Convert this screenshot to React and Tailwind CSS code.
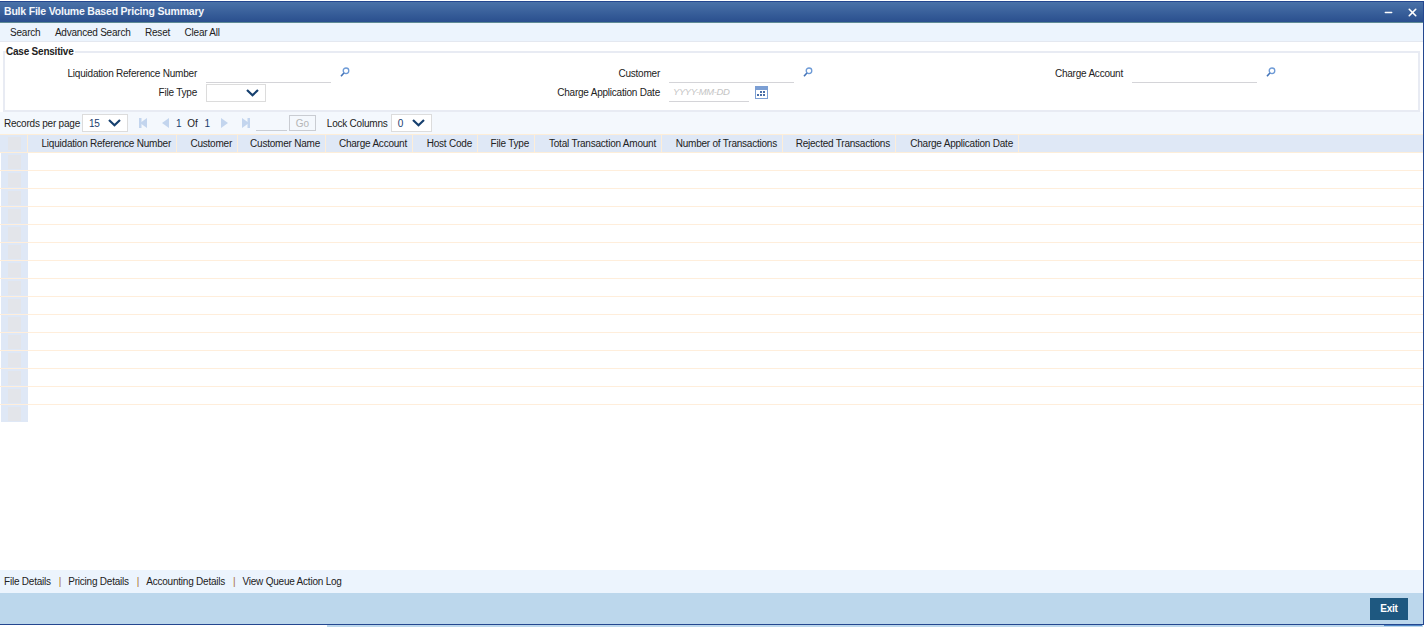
import React from "react";
import { X, Minus } from "lucide-react";

const columns = [
  { label: "Liquidation Reference Number", width: "w-[149px]" },
  { label: "Customer", width: "w-[61px]" },
  { label: "Customer Name", width: "w-[88px]" },
  { label: "Charge Account", width: "w-[87px]" },
  { label: "Host Code", width: "w-[65px]" },
  { label: "File Type", width: "w-[57px]" },
  { label: "Total Transaction Amount", width: "w-[127px]" },
  { label: "Number of Transactions", width: "w-[121px]" },
  { label: "Rejected Transactions", width: "w-[113px]" },
  { label: "Charge Application Date", width: "w-[123px]" },
];

const rows = Array.from({ length: 15 }, (_, i) => i);

const LookupIcon = () => (
  <svg width="10" height="10" viewBox="0 0 10 10" className="ml-[9px] mb-[4px]">
    <circle cx="6" cy="3.8" r="2.8" fill="none" stroke="#6d9ad6" strokeWidth="1.3" />
    <path d="M3.9 6 L1 9.2" stroke="#4474b8" strokeWidth="1.6" />
  </svg>
);

const CalendarIcon = () => (
  <svg width="13" height="13" viewBox="0 0 13 13" className="ml-[6px]">
    <rect x="0" y="0" width="13" height="13" fill="#7c9fd4" />
    <rect x="1" y="4" width="11" height="8" fill="#ffffff" />
    <path d="M5 5h2v2H5zM8 5h2v2H8zM2 8h2v2H2zM5 8h2v2H5zM8 8h2v2H8z" fill="#4a6fa8" />
  </svg>
);

const SelectBox = ({ value, width }) => (
  <div className={`flex h-[18px] items-center justify-between border border-[#dcdcdc] bg-white pl-[6px] pr-[6px] ${width}`}>
    <span className="text-[#1a3c6e]">{value}</span>
    <svg width="13" height="8" viewBox="0 0 13 8">
      <path d="M1 1 L6.5 6.2 L12 1" fill="none" stroke="#16406f" strokeWidth="2.2" />
    </svg>
  </div>
);

const PagerIcon = ({ dir, bar }) => (
  <svg width="9" height="10" viewBox="0 0 9 10" fill="#c3d5ee">
    {dir === "left" ? <path d="M8 0v10L1 5z" /> : <path d="M1 0v10l7-5z" />}
    {bar && (dir === "left" ? <rect x="0" y="0" width="2.5" height="10" /> : <rect x="6.5" y="0" width="2.5" height="10" />)}
  </svg>
);

const Field = ({ label, children }) => (
  <div className="flex h-[19px] items-center">
    <label className="w-[192px] shrink-0 text-right">{label}</label>
    <div className="ml-[9px] flex items-center">{children}</div>
  </div>
);

const TextInput = ({ width = "w-[125px]", placeholder }) => (
  <div className={`flex h-[18px] items-center border-b border-[#d4d4d8] pl-[4px] text-[9.5px] italic tracking-[-0.4px] text-[#c4c4c4] ${width}`}>
    {placeholder}
  </div>
);

export default function App() {
  return (
    <div className="h-[627px] w-[1427px] overflow-hidden bg-white font-['Liberation_Sans',Arial,sans-serif] text-[10px] tracking-[-0.22px] text-[#222222]">
      <div className="mt-[1px] flex h-[624px] w-[1424px] flex-col border-t border-r border-b border-[#24478f]">
        {/* title bar */}
        <div className="flex h-[21px] shrink-0 items-center justify-between border-b border-[#5f8a94] bg-gradient-to-b from-[#4a72a8] to-[#2a4f8e] pl-[4px] pr-[4px]">
          <span className="mb-[1px] text-[10.5px] font-bold tracking-[-0.2px] text-[#f2f6fb]">Bulk File Volume Based Pricing Summary</span>
          <div className="flex items-center gap-[12px] text-white">
            <Minus size={11} strokeWidth={3} />
            <X size={13} strokeWidth={3} />
          </div>
        </div>

        {/* toolbar */}
        <div className="flex h-[19px] shrink-0 items-center gap-[14.5px] border-b border-[#e4e8f0] bg-[#ecf4fd] pl-[10px]">
          <span>Search</span>
          <span>Advanced Search</span>
          <span>Reset</span>
          <span>Clear All</span>
        </div>

        {/* filters */}
        <div className="relative ml-[3px] mr-[3px] mt-[9px] h-[61px] shrink-0 border-2 border-[#e8ebf3]">
          <span className="absolute left-[1px] top-[-9px] bg-white pr-[1px] font-bold text-[#222222]">Case Sensitive</span>
          <div className="grid grid-cols-[463px_463px_1fr] pt-[11px]">
            <div className="flex flex-col">
              <Field label="Liquidation Reference Number">
                <TextInput />
                <LookupIcon />
              </Field>
              <Field label="File Type">
                <SelectBox value="" width="w-[60px]" />
              </Field>
            </div>
            <div className="flex flex-col">
              <Field label="Customer">
                <TextInput />
                <LookupIcon />
              </Field>
              <Field label="Charge Application Date">
                <TextInput width="w-[80px]" placeholder="YYYY-MM-DD" />
                <CalendarIcon />
              </Field>
            </div>
            <div className="flex flex-col">
              <Field label="Charge Account">
                <TextInput />
                <LookupIcon />
              </Field>
            </div>
          </div>
        </div>

        {/* pager */}
        <div className="flex h-[22px] shrink-0 items-center bg-[#f4f8fd] pl-[4px]">
          <span className="w-[76px] shrink-0 whitespace-nowrap">Records per page</span>
          <div className="ml-[2px]">
            <SelectBox value="15" width="w-[46px]" />
          </div>
          <div className="ml-[11px] flex items-center gap-[13px]">
            <PagerIcon dir="left" bar />
            <PagerIcon dir="left" />
          </div>
          <span className="ml-[6px] text-[#1a3c6e]">1</span>
          <span className="ml-[6px]">Of</span>
          <span className="ml-[7px] text-[#1a3c6e]">1</span>
          <div className="ml-[10px] flex items-center gap-[12px]">
            <PagerIcon dir="right" />
            <PagerIcon dir="right" bar />
          </div>
          <div className="ml-[6px] h-[15px] w-[31px] border-b border-[#c9cdd4]" />
          <div className="ml-[2px] flex h-[16px] w-[27px] items-center justify-center border border-[#c9ccd2] text-[#b5b5b5]">Go</div>
          <span className="ml-[11px] w-[61px] shrink-0 whitespace-nowrap">Lock Columns</span>
          <div className="ml-[3px]">
            <SelectBox value="0" width="w-[41px]" />
          </div>
        </div>

        {/* grid */}
        <div className="flex h-[19px] shrink-0 border-y border-[#fdeed9] bg-[#dfe8f6]">
          <div className="flex w-[28px] shrink-0 items-center justify-center border-r border-[#fdeed9] pl-[1px]">
            <div className="h-[13px] w-[13px] bg-[#e3e5ea]" />
          </div>
          {columns.map((col) => (
            <div key={col.label} className={`flex items-center justify-end whitespace-nowrap border-r border-[#fdeed9] pr-[5px] ${col.width}`}>
              {col.label}
            </div>
          ))}
        </div>
        {rows.map((row) => (
          <div key={row} className={row === 14 ? "flex h-[17px] shrink-0" : "flex h-[18px] shrink-0 border-b border-[#ffeedb]"}>
            <div className="ml-[1px] flex w-[27px] shrink-0 items-center justify-center bg-[#dfe8f6]">
              <div className="h-[14px] w-[13px] bg-[#e3e5ea]" />
            </div>
          </div>
        ))}

        <div className="flex-1" />

        {/* sub screens */}
        <div className="flex h-[23px] shrink-0 items-center bg-[#ecf4fd] pl-[4px]">
          <span>File Details</span>
          <span className="ml-[8px] mr-[7px] text-[#a86a30]">|</span>
          <span>Pricing Details</span>
          <span className="ml-[8px] mr-[7px] text-[#a86a30]">|</span>
          <span>Accounting Details</span>
          <span className="ml-[8px] mr-[7px] text-[#a86a30]">|</span>
          <span>View Queue Action Log</span>
        </div>

        {/* footer */}
        <div className="flex min-h-[31px] items-center justify-end bg-[#bcd7ec] pr-[15px]">
          <button className="h-[22px] w-[38px] bg-[#1e5880] text-[10px] font-bold text-white">Exit</button>
        </div>
      </div>

      {/* strip showing under the window */}
      <div className="ml-[327px] flex h-[2px] w-[1096px] justify-end bg-[#bcd7ec]">
        <div className="mr-[1px] h-[1px] w-[38px] bg-[#4f86c4]" />
      </div>
    </div>
  );
}
